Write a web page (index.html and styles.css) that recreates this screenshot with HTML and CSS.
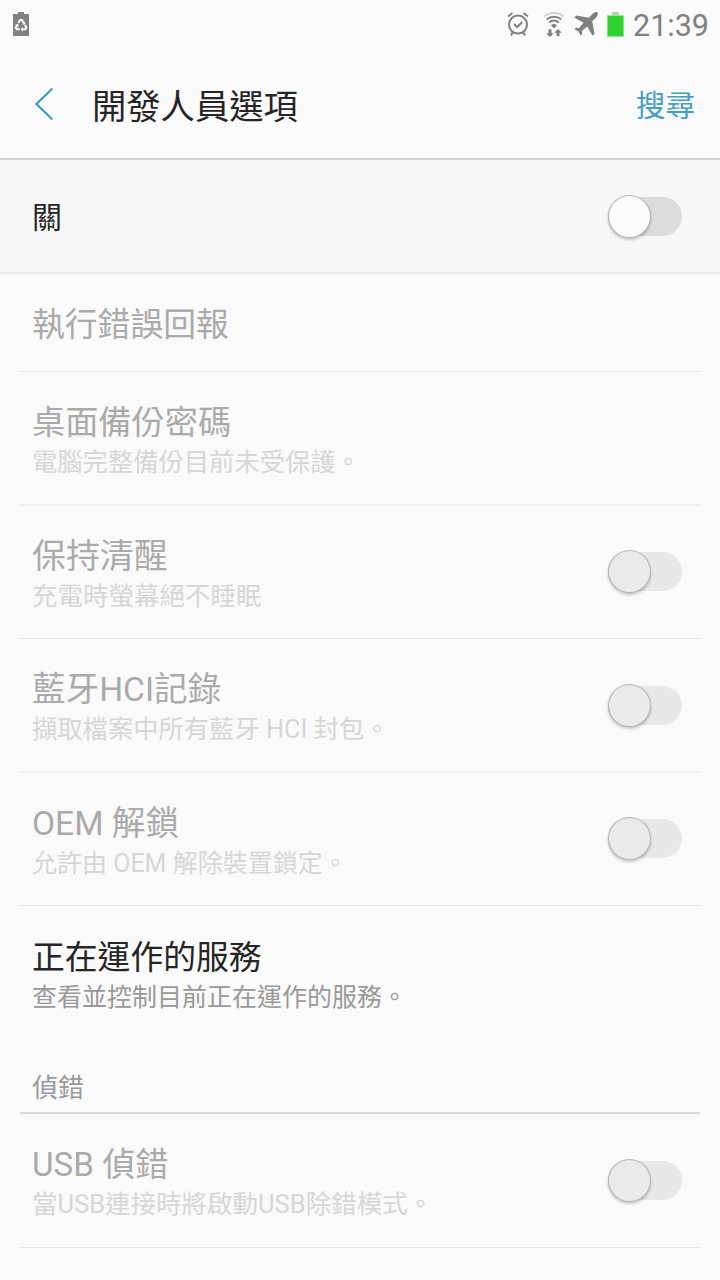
FILE: index.html
```html
<!DOCTYPE html>
<html lang="zh-TW">
<head>
<meta charset="utf-8">
<title>開發人員選項</title>
<link rel="stylesheet" href="styles.css">
</head>
<body>
<div class="status">
  <svg class="status-recycle" width="16" height="24" viewBox="0 0 16 24">
    <path fill="#808080" d="M0 2h5V0h6v2h5v22H0z"/>
    <g fill="none" stroke="#fafafa" stroke-width="2">
      <path d="M5.2 10.8 7.2 8h1.7l1.7 2.8"/>
      <path d="M12 13l1.3 2.5-1 1.8H9.200"/>
      <path d="M6.800 17.300H3.700l-1-1.800 1.500-2.500"/>
    </g>
    <path fill="#fafafa" d="M12.200 9.300v3.200H8.900zM9.800 14.700v5L7.600 17.300zM2 12.500l3.300-.5.500 3.200z"/>
  </svg>
  <div class="status-right">
    <svg width="22" height="25" viewBox="0 0 22 25" fill="none" stroke="#808080">
      <circle cx="11" cy="12.600" r="9" stroke-width="2"/>
      <path stroke-width="2" d="M1 4.600 5.400 1M21 4.600 16.600 1M5.500 20.500 4 23.500M16.500 20.500l1.500 3M7 12l3.200 3 5-5"/>
    </svg>
    <svg width="22" height="25" viewBox="0 0 22 25">
      <path fill="none" stroke="#d0d0d0" stroke-width="2" d="M1.400 4.500a14.500 14.500 0 0 1 19.200 0"/>
      <g fill="none" stroke="#808080" stroke-width="2">
        <path d="M3.800 7.500a10.800 10.800 0 0 1 14.400 0"/>
        <path d="M6.200 10.500a7 7 0 0 1 9.600 0"/>
      </g>
      <path fill="#808080" d="M8 13.200q3-2.200 6 0l-3 3.300zM5.500 17.200h3v4h2.300L7 25l-3.800-3.800h2.300zM13.500 24.200h3v-3.500h2.300L15 16.900l-3.800 3.800h2.300z"/>
    </svg>
    <svg class="plane" width="24" height="24" viewBox="0 0 24 24">
      <path fill="#808080" d="M23.600.4c-1.100-1-3.700.1-5.200 1.600L14.700 5.800 2.300 3.400.3 5.400l9.300 5.400-4.700 5.300-3-.4L.4 17.200l4.100 2.200 2.200 4.200 1.500-1.600-.4-3 5.400-4.500 5.300 9.200 2-2L18.200 9.300 22 5.600c1.500-1.600 2.500-4.200 1.600-5.200z"/>
    </svg>
    <svg class="battery" width="17" height="25" viewBox="0 0 17 25">
      <path fill="#a5dca5" d="M0 3h5V0h7v3h5v22H0z"/>
      <path fill="#2fd32f" d="M.8 4h15.400v20H.8z"/>
    </svg>
    <span class="clock">21:39</span>
  </div>
</div>
<header class="header">
  <svg class="back" width="20" height="34" viewBox="0 0 20 34"><path fill="none" stroke="#459fc2" stroke-width="2.400" d="M18.400 1.500 2.500 17 18.400 32.500"/></svg>
  <h1 class="heading">開發人員選項</h1>
  <span class="search">搜尋</span>
</header>
<section class="master">
  <span class="master-label">關</span>
  <span class="switch switch-master"></span>
</section>
<main class="list">
  <div class="row row-single disabled">
    <div class="title title-narrow">執行錯誤回報</div>
  </div>
  <div class="row row-tall disabled">
    <div><div class="title title-medium">桌面備份密碼</div><div class="summary">電腦完整備份目前未受保護。</div></div>
  </div>
  <div class="row disabled">
    <div><div class="title title-wide">保持清醒</div><div class="summary summary-wide">充電時螢幕絕不睡眠</div></div>
    <span class="switch"></span>
  </div>
  <div class="row row-tall disabled">
    <div><div class="title">藍牙HCI記錄</div><div class="summary">擷取檔案中所有藍牙 HCI 封包。</div></div>
    <span class="switch"></span>
  </div>
  <div class="row disabled">
    <div><div class="title">OEM 解鎖</div><div class="summary summary-narrow">允許由 OEM 解除裝置鎖定。</div></div>
    <span class="switch"></span>
  </div>
  <div class="row row-last">
    <div><div class="title title-narrow">正在運作的服務</div><div class="summary summary-narrow">查看並控制目前正在運作的服務。</div></div>
  </div>
  <h2 class="category">偵錯</h2>
  <div class="row row-usb disabled">
    <div><div class="title title-medium">USB 偵錯</div><div class="summary summary-wide">當USB連接時將啟動USB除錯模式。</div></div>
    <span class="switch"></span>
  </div>
</main>
</body>
</html>
```
FILE: styles.css
```css
* { box-sizing: border-box; }
body {
  margin: 0;
  height: 1280px;
  overflow: hidden;
  background: #fafafa;
  color: #252525;
  font-family: Roboto, "Noto Sans CJK TC", sans-serif;
  white-space: nowrap;
}
h1, h2 { margin: 0; font-weight: 400; }
svg { display: block; }
.status {
  display: flex;
  justify-content: space-between;
  align-items: flex-start;
  height: 50px;
  padding: 12px 11px 0 13px;
}
.status-right { display: flex; align-items: flex-start; }
.status-right svg + svg { margin-left: 14px; }
.status-right .plane { margin-left: 9px; }
.status-right svg + .battery { margin-left: 9px; }
.clock {
  width: 76px;
  margin-left: 9px;
  color: #808080;
  font-size: 30.500px;
  line-height: 28px;
}
.header {
  display: flex;
  align-items: center;
  height: 110px;
  padding: 0 25px 0 34px;
  border-bottom: 2px solid #d2d2d2;
}
.back { margin-top: -1px; }
.heading { margin-left: 38px; padding-top: 5px; font-size: 34.300px; line-height: 50px; }
.search { margin-left: auto; padding-top: 4px; color: #459fc2; font-size: 29.500px; line-height: 50px; }
.master {
  display: flex;
  justify-content: space-between;
  height: 114px;
  padding: 34px 38px 0 32px;
  background: #f7f7f7;
  border-bottom: 2px solid #e9e9e9;
}
.master-label { font-size: 30px; line-height: 48px; }
.list { padding: 0 20px; }
.row {
  display: flex;
  justify-content: space-between;
  height: 133px;
  padding: 31px 18px 0 12px;
  border-bottom: 1px solid #e5e5e5;
}
.row-tall { height: 134px; border-bottom: 2px solid #f0f0f0; }
.row-tall .switch { margin-top: 16px; }
.row-single { height: 98px; }
.row-last { height: 148px; padding-top: 32px; border-bottom: 0; }
.row-usb { height: 134px; }
.row-usb .switch { margin-top: 16px; }
.title { font-size: 33.600px; line-height: 40px; }
.title-wide { font-size: 33.900px; }
.title-medium { font-size: 33.200px; }
.title-narrow { font-size: 32.800px; }
.summary { font-size: 25.300px; line-height: 40px; color: #999; }
.summary-wide { font-size: 25.500px; line-height: 38px; }
.summary-narrow { font-size: 25px; }
.disabled .title { color: #aaa; }
.disabled .summary { color: #d6d6d6; }
.switch {
  position: relative;
  flex: none;
  width: 74px;
  height: 39px;
  margin-top: 15px;
  border-radius: 20px;
  background: #e8e8e8;
}
.switch::before {
  content: "";
  position: absolute;
  left: 1px;
  top: -1px;
  width: 41px;
  height: 41px;
  border-radius: 50%;
  background: #eaeaea;
  box-shadow: 0 0 0 1px #b5b5b5, 0 2px 3px 1px rgba(0, 0, 0, .22);
}
.switch-master { margin-top: 3px; background: #dcdcdc; }
.switch-master::before { background: #fbfbfb; }
.category {
  height: 60px;
  padding-left: 12px;
  border-bottom: 2px solid #d7d7d7;
  color: #999;
  font-size: 26px;
  line-height: 69px;
}
```
